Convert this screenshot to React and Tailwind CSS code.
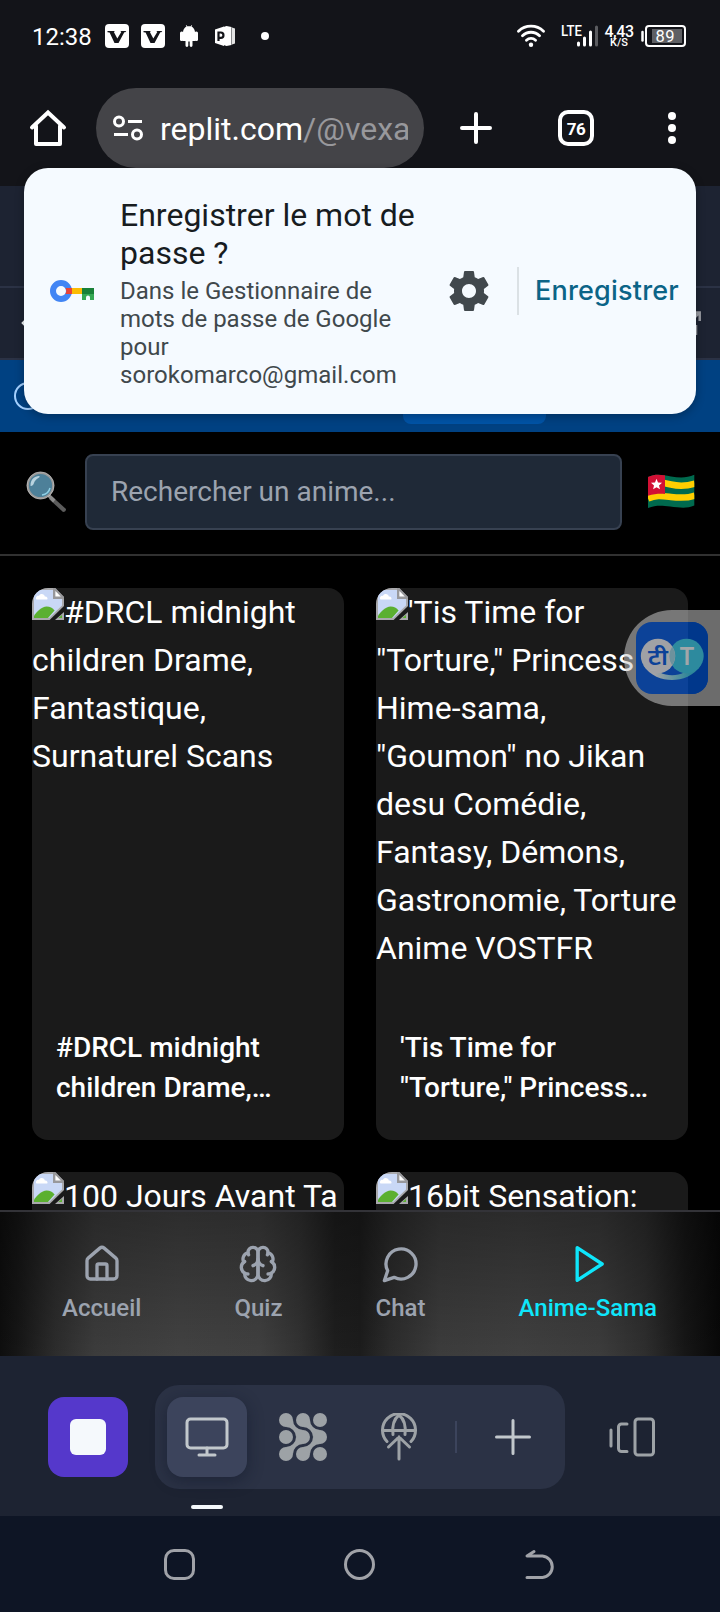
import React from "react";

const cards = [
  {
    alt: "#DRCL midnight children Drame, Fantastique, Surnaturel Scans",
    title: ["#DRCL midnight", "children Drame,…"],
  },
  {
    alt: "'Tis Time for \"Torture,\" Princess Hime-sama, \"Goumon\" no Jikan desu Comédie, Fantasy, Démons, Gastronomie, Torture Anime VOSTFR",
    title: ["'Tis Time for", "\"Torture,\" Princess…"],
  },
  { alt: "100 Jours Avant Ta", title: [] },
  { alt: "16bit Sensation:", title: [] },
];

function VBadge() {
  return (
    <svg className="h-6 w-6" viewBox="0 0 24 24">
      <rect width="24" height="24" rx="4" fill="#fff" />
      <path d="M2.500 7h7.200l-.7 1.200 3.300 6.300 4-6.500-1-1h6l-1 1.300h-1L13.500 19h-4L4.600 8.600l-2.100-.4z" fill="#131419" />
    </svg>
  );
}

function StatusBar() {
  return (
    <div className="flex h-[72px] items-center pl-8 pr-[33px] text-white">
      <span className="w-[73px] pt-px text-2xl leading-6">12:38</span>
      <VBadge />
      <span className="w-3" />
      <VBadge />
      <svg className="ml-[15px] h-[22px] w-[18px]" viewBox="0 0 18 22" fill="#fff">
        <path d="M3 7C3.200 4 5 2.200 6.500 1.500L5.800.2l.5-.2.9 1.200h3.600L11.700 0l.5.2-.7 1.300C13 2.200 14.800 4 15 7v9H12.500v4.500a1.400 1.400 0 0 1-2.800 0V16.500h-1.400v4A1.400 1.400 0 0 1 5.500 20.500V16H3z" />
        <rect x="0" y="6.500" width="3.500" height="9.500" rx="1.500" />
        <rect x="14.500" y="6.500" width="3.500" height="9.500" rx="1.500" />
      </svg>
      <svg className="ml-[17px] h-[20px] w-[20px]" viewBox="0 0 20 20">
        <path d="M0 3.500l9-3V20L0 17z" fill="#fff" />
        <path d="M8.500 1l3-1 5 1v18l-5 1-3-1z" fill="#fff" />
        <path d="M17 1.500l3 1v15l-3 1z" fill="#e4e4e4" />
        <path d="M3.500 15V6.500h2.300a2.600 2.600 0 0 1 0 5.300H3.500" fill="none" stroke="#131419" strokeWidth="2.200" />
      </svg>
      <span className="ml-[26px] h-2 w-2 rounded-full bg-white" />
      <span className="flex-1" />
      <svg className="h-6 w-7" viewBox="0 0 28 24" fill="none" stroke="#fff" strokeWidth="2.800" strokeLinecap="round">
        <path d="M1.500 7.200a18 18 0 0 1 25 0M5.500 11.800a12 12 0 0 1 17 0M9.500 16.200a6.500 6.500 0 0 1 9 0" />
        <circle cx="14" cy="20.800" r="2.200" fill="#fff" stroke="none" />
      </svg>
      <svg className="ml-4 h-6 w-[38px]" viewBox="0 0 38 24">
        <text x="0" y="12" fontSize="15" fontWeight="500" fill="#fff" textLength="21" lengthAdjust="spacingAndGlyphs" fontFamily="Roboto, sans-serif">LTE</text>
        <g stroke="#fff" strokeWidth="3" strokeLinecap="round">
          <path d="M17.500 19v2M23.500 14v7M29.500 8v13" />
          <path d="M35.500 3v18" stroke="#5b5c60" />
        </g>
      </svg>
      <div className="ml-[6px] flex w-7 flex-col items-center font-medium">
        <span className="text-base leading-[13px] tracking-[-0.4px]">4,43</span>
        <span className="text-[11px] leading-[10px]">K/S</span>
      </div>
      <svg className="ml-2 h-[22px] w-[46px]" viewBox="0 0 46 22">
        <path d="M1.500 7v8.500" stroke="#fff" strokeWidth="2.500" strokeLinecap="round" />
        <rect x="5" y="1" width="39" height="20" rx="3" fill="none" stroke="#fff" strokeWidth="2" />
        <rect x="11" y="4" width="30" height="14" fill="#5e5f63" />
        <text x="14.500" y="16.500" fontSize="16.500" fill="#fff" textLength="19" fontFamily="Roboto, sans-serif">89</text>
      </svg>
    </div>
  );
}

function BrowserBar() {
  return (
    <div className="flex h-[114px] items-start pt-4">
      <svg className="ml-7 mt-5 h-10 w-10" viewBox="0 0 40 40" fill="none" stroke="#fff" strokeWidth="4" strokeLinejoin="round" strokeLinecap="round">
        <path d="M4 19.500L20 4.500l16 15" strokeLinejoin="miter" />
        <path d="M8 18v18h24V18" />
      </svg>
      <div className="ml-7 flex h-20 w-[328px] items-center rounded-full bg-[#444448] pl-4">
        <svg className="h-7 w-8" viewBox="0 0 32 28" fill="none" stroke="#fff" strokeWidth="3">
          <circle cx="7" cy="7.500" r="4.500" />
          <path d="M16 7.500h14M2 20.500h14" />
          <circle cx="25" cy="20.500" r="4.500" />
        </svg>
        <div className="ml-4 w-[248px] overflow-hidden whitespace-nowrap pt-px text-[32px] leading-10 text-white">
          replit.com<span className="text-[#98989c]">/@vexa</span>
        </div>
      </div>
      <svg className="ml-9 mt-6 h-8 w-8" viewBox="0 0 32 32" stroke="#fff" strokeWidth="4" strokeLinecap="round">
        <path d="M16 2v28M2 16h28" />
      </svg>
      <div className="ml-[66px] mt-[22px] flex h-9 w-9 items-center justify-center rounded-[10px] border-4 border-white pt-px text-[17px] font-bold leading-5 tracking-[-0.5px] text-white">
        76
      </div>
      <div className="ml-[74px] mt-6 flex h-8 w-2 flex-col justify-between">
        <i className="h-2 w-2 rounded-full bg-white" />
        <i className="h-2 w-2 rounded-full bg-white" />
        <i className="h-2 w-2 rounded-full bg-white" />
      </div>
    </div>
  );
}

function PageHeader() {
  return (
    <div className="h-[246px]">
      <div className="h-[100px] bg-[#1d2332]" />
      <div className="flex h-[74px] items-center justify-between border-y-2 border-[#2b3245] bg-[#1d2332] pl-[21px] pr-[19px]">
        <svg className="h-6 w-6" viewBox="0 0 24 24" fill="none" stroke="#f5f9fc" strokeWidth="2.500">
          <path d="M8 6l-6 6 6 6M2 12h18" />
        </svg>
        <svg className="h-6 w-6" viewBox="0 0 24 24" fill="none" stroke="#9a9ca3" strokeWidth="2.500">
          <path d="M14 1.500h8.700V10M12 12L22 2M19 14v9H1V5h9" />
        </svg>
      </div>
      <div className="flex h-[72px] items-center bg-[#004182]">
        <i className="ml-[14px] h-[28px] w-[28px] rounded-full border-2 border-[#a5d1ff]" />
        <i className="ml-[361px] h-14 w-[143px] rounded-lg bg-[#0053a6]" />
      </div>
    </div>
  );
}

function SavePasswordPopup() {
  return (
    <div className="absolute left-6 top-[168px] flex h-[246px] w-[672px] items-center rounded-[24px] bg-[#f5faff] shadow-[0_2px_10px_rgba(0,0,0,0.3)]">
      <svg className="ml-[26px] h-[22px] w-11" viewBox="0 0 44 22">
        <circle cx="11" cy="11" r="8" fill="none" stroke="#4285f4" strokeWidth="6" />
        <path d="M15.500 8H22v6h-6.500a6 6 0 0 0 0-6z" fill="#ea4335" />
        <path d="M22 8h10v6H22z" fill="#fbbc04" />
        <path d="M32 8h12v6H32z" fill="#188038" />
        <path d="M32 14h12v6h-4v-2.500a2 2 0 0 0-4 0V20h-4z" fill="#34a853" />
      </svg>
      <div className="ml-[26px] w-[320px] pt-[3px]">
        <div className="text-[32px] leading-[38px] text-[#171c1f]">
          Enregistrer le mot de
          <br />
          passe ?
        </div>
        <div className="mt-[5px] text-2xl leading-7 text-[#40484c]">
          Dans le Gestionnaire de
          <br />
          mots de passe de Google
          <br />
          pour
          <br />
          <span className="tracking-[0.03px]">sorokomarco@gmail.com</span>
        </div>
      </div>
      <svg className="ml-[5px] h-12 w-12" viewBox="0 0 24 24" fill="#41484d">
        <path d="M19.430 12.980c.04-.32.070-.64.070-.98s-.03-.66-.07-.98l2.110-1.650c.19-.15.240-.42.120-.64l-2-3.460c-.12-.22-.39-.3-.61-.22l-2.490 1c-.52-.4-1.080-.73-1.690-.98l-.38-2.650C14.460 2.180 14.250 2 14 2h-4c-.25 0-.46.18-.49.420l-.38 2.650c-.61.250-1.170.590-1.690.980l-2.490-1c-.23-.09-.49 0-.61.220l-2 3.460c-.13.220-.07.490.12.640l2.110 1.650c-.04.320-.07.650-.07.980s.030.660.070.980l-2.110 1.650c-.19.150-.24.420-.12.640l2 3.460c.12.220.39.300.61.220l2.490-1c.52.400 1.080.730 1.690.980l.38 2.650c.030.240.240.420.490.420h4c.25 0 .46-.18.490-.42l.38-2.650c.61-.25 1.170-.59 1.690-.98l2.490 1c.23.090.490 0 .61-.22l2-3.460c.12-.22.070-.49-.12-.64l-2.110-1.650zM12 15.500c-1.930 0-3.500-1.570-3.500-3.500s1.570-3.500 3.500-3.500 3.500 1.570 3.500 3.500-1.570 3.500-3.500 3.500z" />
      </svg>
      <i className="ml-6 h-12 w-0.5 bg-[#dbe1e5]" />
      <span className="ml-4 font-['Inter'] text-[27px] font-medium tracking-[0.2px] text-[#0b6487]">Enregistrer</span>
    </div>
  );
}

function SearchRow() {
  return (
    <div className="flex h-[124px] items-start border-b-2 border-[#313131] bg-black pl-[25px] pt-[22px]">
      <svg className="mt-[17px] h-[42px] w-[42px]" viewBox="0 0 42 42">
        <path d="M26 24.500L41 38a3 3 0 0 1-3 3L24 28z" fill="#5c5c5c" />
        <path d="M24.500 23l6 5.500-2.500 3-5.500-6z" fill="#8e8e8e" />
        <circle cx="15.500" cy="14.500" r="12.600" fill="#4d8099" stroke="#999" strokeWidth="2" />
        <circle cx="15.500" cy="14.500" r="13.600" fill="none" stroke="#d8d8d8" strokeWidth=".6" />
        <path d="M5.500 14.500c0-6 4-9.500 8.500-9.500 3 1-4 2.500-5 7-.5 2.500-3.500 4-3.500 2.500z" fill="#b9d3df" />
        <path d="M17 24c4-.5 7-3 8-7" stroke="#8fd0e6" strokeWidth="1.500" fill="none" />
      </svg>
      <input
        className="ml-[18px] h-[76px] w-[537px] rounded-lg border-2 border-[#374151] bg-[#1f2937] px-6 pb-0.5 text-[28px] text-white placeholder-[#9ca3af]"
        placeholder="Rechercher un anime..."
      />
      <svg className="ml-[25px] mt-5 h-9 w-12" viewBox="0 0 48 36">
        <defs>
          <clipPath id="flag">
            <path d="M1 3C9-.5 15 1 24 2.500S40 4 47.300.800V31.500c-8 3.500-15 2-24 1S9 31 1 34z" />
          </clipPath>
        </defs>
        <g clipPath="url(#flag)">
          <rect width="48" height="36" fill="#006a4e" />
          <g fill="none" stroke="#ffce00" strokeWidth="6.500">
            <path d="M1 10C9 7.500 15 8.500 24 10.500s16 1.500 24-1M1 24.500C9 21 15 22 24 23s16 1.500 24-1.500" />
          </g>
          <path d="M0 0h18v20C12 19.500 7 20 0 22z" fill="#d21034" />
          <path d="M9.500 4.800l1.500 3.700 4 .3-3 2.600 1 3.900-3.500-2.100-3.400 2.100.9-3.900-3-2.600 4-.3z" fill="#fff" />
        </g>
      </svg>
    </div>
  );
}

function BrokenImage() {
  return (
    <svg className="float-left h-8 w-8" viewBox="0 0 16 16">
      <path d="M0 0h11.500L16 4.500V9L8.800 16H0z" fill="#a9a9ac" />
      <path d="M1 1h10l4 4v3.700L8.500 15H1z" fill="#c9d8f6" />
      <path d="M2.200 5.800c-.7-1.200.5-2.300 1.300-1.800.4-1.500 2.800-1.200 2.900.2 1.200-.1 1.700 1 1.200 1.600z" fill="#fff" />
      <path d="M1 15v-1c1.200-2 3.800-4.700 6.300-4.700 1.700 0 3 .6 4 2L8 15z" fill="#5bb030" />
      <path d="M10.500 0h1.200L16 4.500v1h-5.500z" fill="#98989b" />
      <path d="M11.700 1.500V4.300h2.700z" fill="#fff" />
      <path d="M16 12v4h-4.500z" fill="#a9a9ac" />
      <path d="M15 13.500V15h-1.800z" fill="#5bb030" />
    </svg>
  );
}

function Card({ card }) {
  return (
    <div className="h-[552px] overflow-hidden rounded-2xl bg-[#1a1a1a] text-white">
      <div className="h-[416px] text-[32px] leading-[48px]">
        <BrokenImage />
        {card.alt}
      </div>
      <div className="p-6 text-[28px] font-medium leading-10">
        {card.title.map((line) => (
          <div key={line} className="whitespace-nowrap">{line}</div>
        ))}
      </div>
    </div>
  );
}

function NavItem({ label, children, className }) {
  return (
    <div className={"flex flex-col items-center text-2xl font-medium " + className}>
      <svg className="h-10 w-10 overflow-visible" viewBox="0 0 24 24" fill="none" stroke="currentColor" strokeWidth="2" strokeLinecap="round" strokeLinejoin="round">
        {children}
      </svg>
      <span className="mt-2 leading-8">{label}</span>
    </div>
  );
}

function AppNav() {
  return (
    <div className="h-[146px] bg-[linear-gradient(90deg,#0e0e0e_0px,#161616_18px,#2c2c2c_55px,#3c3c3c_95px,#424242_180px,#404040_260px,#323232_300px,#1e1e1e_335px,#1c1c1c_360px,#2c2c2c_390px,#3c3c3c_440px,#404040_520px,#3c3c3c_600px,#2e2e2e_645px,#161616_685px,#080808_720px)]">
      <div className="flex h-full justify-between border-t-2 border-[#333338] bg-[linear-gradient(180deg,rgba(0,0,0,0.32),rgba(0,0,0,0))] pl-[62px] pr-[63px] pt-8 text-[#9ca3af]">
        <NavItem label="Accueil" className="">
          <path d="M15 21v-8a1 1 0 0 0-1-1h-4a1 1 0 0 0-1 1v8" />
          <path d="M3 10a2 2 0 0 1 .709-1.528l7-5.999a2 2 0 0 1 2.582 0l7 5.999A2 2 0 0 1 21 10v9a2 2 0 0 1-2 2H5a2 2 0 0 1-2-2z" />
        </NavItem>
        <NavItem label="Quiz" className="">
          <path d="M12 5a3 3 0 1 0-5.997.125 4 4 0 0 0-2.526 5.770 4 4 0 0 0 .556 6.588A4 4 0 1 0 12 18Z" />
          <path d="M12 5a3 3 0 1 1 5.997.125 4 4 0 0 1 2.526 5.770 4 4 0 0 1-.556 6.588A4 4 0 1 1 12 18Z" />
          <path d="M15 13a4.500 4.500 0 0 1-3-4 4.500 4.500 0 0 1-3 4" />
          <path d="M17.599 6.500a3 3 0 0 0 .399-1.375" />
          <path d="M6.003 5.125A3 3 0 0 0 6.401 6.500" />
          <path d="M3.477 10.896a4 4 0 0 1 .585-.396" />
          <path d="M19.938 10.500a4 4 0 0 1 .585.396" />
          <path d="M6 18a4 4 0 0 1-1.967-.516" />
          <path d="M19.967 17.484A4 4 0 0 1 18 18" />
        </NavItem>
        <NavItem label="Chat" className="">
          <path d="M7.900 20A9 9 0 1 0 4 16.100L2 22Z" />
        </NavItem>
        <NavItem label="Anime-Sama" className="text-[#0ee6fb]">
          <path d="M5.500 2.200l15 9.800-15 9.800z" />
        </NavItem>
      </div>
    </div>
  );
}

function WorkspaceBar() {
  return (
    <div className="flex h-40 items-start bg-[#1d2332] pl-12 pt-[29px]">
      <div className="mt-3 flex h-20 w-20 items-center justify-center rounded-2xl bg-[#5538cb]">
        <i className="h-9 w-9 rounded-md bg-[#f5f9fc]" />
      </div>
      <div className="ml-[27px] flex h-[104px] w-[410px] items-start rounded-[24px] bg-[#2b3245] pl-3 pt-3">
        <div className="flex w-20 flex-col items-center">
          <div className="flex h-20 w-20 items-center justify-center rounded-2xl bg-[#3c445c] shadow-[0_4px_16px_rgba(14,21,37,0.45)]">
            <svg className="h-11 w-11" viewBox="0 0 44 44" fill="none" stroke="#c2c8cc" strokeWidth="3" strokeLinecap="round" strokeLinejoin="round">
              <rect x="2" y="4" width="40" height="29" rx="3.500" />
              <path d="M22 33v7M14 40h16" />
            </svg>
          </div>
          <i className="mt-7 h-1 w-8 rounded-full bg-[#f5f9fc]" />
        </div>
        <svg className="ml-8 mt-4 h-12 w-12" viewBox="0 0 48 48" fill="#9da2a6">
          <circle cx="7" cy="7" r="7" />
          <circle cx="24" cy="7" r="7" />
          <circle cx="41" cy="7" r="7" />
          <circle cx="7" cy="24" r="7" />
          <circle cx="24" cy="24" r="7" />
          <circle cx="41" cy="24" r="7" />
          <circle cx="7" cy="41" r="7" />
          <circle cx="24" cy="41" r="7" />
          <circle cx="41" cy="41" r="7" />
          <path d="M14 7A10 10 0 0 0 24 17L17 24A10 10 0 0 0 7 14zM14 41A10 10 0 0 1 24 31L17 24A10 10 0 0 1 7 34z" />
          <path d="M31 7A10 10 0 0 0 41 17L34 24A10 10 0 0 0 24 14zM31 41A10 10 0 0 1 41 31L34 24A10 10 0 0 1 24 34z" />
        </svg>
        <svg className="ml-[54px] mt-4 h-12 w-9" viewBox="0 0 36 48" fill="none" stroke="#9da2a6" strokeWidth="3" strokeLinecap="round" strokeLinejoin="round">
          <path d="M6 28.500a16.500 16.500 0 1 1 24 0M2 17.500h32" />
          <path d="M12 21.500C11 13 13 6 18 2c5 4 7 11 6 19.500" />
          <path d="M18 46V24M7.500 34L18 24l10.500 10" strokeLinejoin="miter" />
        </svg>
        <i className="ml-[38px] mt-6 h-8 w-0.5 bg-[#3c445c]" />
        <svg className="ml-[38px] mt-[22px] h-9 w-9" viewBox="0 0 36 36" stroke="#c2c8cc" strokeWidth="3" strokeLinecap="round">
          <path d="M18 1.500v33M1.500 18h33" />
        </svg>
      </div>
      <svg className="ml-11 mt-8 h-10 w-[46px]" viewBox="0 0 46 40" fill="none" stroke="#9da2a6" strokeWidth="3" strokeLinecap="round" strokeLinejoin="round">
        <path d="M2 13v16M18 7h-5.500a3 3 0 0 0-3 3v21.500a3 3 0 0 0 3 3H18" />
        <rect x="26" y="2" width="18.500" height="36" rx="3" />
      </svg>
    </div>
  );
}

function SystemNav() {
  return (
    <div className="flex h-24 items-center justify-between bg-[#0e1525] pl-[164px] pr-[165px]">
      <i className="h-[31px] w-[31px] rounded-[10px] border-[3px] border-[#a0a2a8]" />
      <i className="h-[31px] w-[31px] rounded-full border-[3px] border-[#a0a2a8]" />
      <svg className="h-[31px] w-[31px]" viewBox="0 0 31 31" fill="none" stroke="#a0a2a8" strokeWidth="3" strokeLinecap="round" strokeLinejoin="round">
        <path d="M10 2.500L3 7h15.500a10.800 10.800 0 0 1 0 21.500H3" />
      </svg>
    </div>
  );
}

function TranslateBubble() {
  return (
    <div className="absolute right-0 top-[610px] flex h-24 w-24 items-center rounded-l-full bg-[rgba(200,200,200,0.54)] pl-3">
      <svg className="h-[72px] w-[72px]" viewBox="0 0 72 72">
        <defs>
          <linearGradient id="smile">
            <stop offset="0.2" stopColor="#a3a3a6" />
            <stop offset="0.8" stopColor="#2d8699" />
          </linearGradient>
        </defs>
        <rect width="72" height="72" rx="16" fill="#0c4298" />
        <path d="M52 0h4a16 16 0 0 1 16 16v40a16 16 0 0 1-16 16h-4z" fill="#00378b" />
        <path d="M7 43C14 54 26 58 36 58S58 54 65 43L50 51H22z" fill="url(#smile)" />
        <path d="M24 50.500C31 54 41 54 48 50.500L36 44z" fill="#0c4298" />
        <circle cx="50.500" cy="34" r="17.200" fill="#2d8a9e" />
        <circle cx="22" cy="34" r="17.200" fill="#a0a1a5" />
        <path d="M36.250 24.400a17.200 17.200 0 0 1 0 19.200 17.200 17.200 0 0 1 0-19.200z" fill="#6d929d" />
        <text x="12" y="43" textLength="20" lengthAdjust="spacingAndGlyphs" fontSize="23" fontWeight="600" fill="#0c4298" fontFamily="'Noto Sans Devanagari', 'Noto Sans', sans-serif">टी</text>
        <text x="51" y="43" textAnchor="middle" fontSize="24" fontWeight="600" fill="#a3a6a9" fontFamily="Inter, sans-serif">T</text>
      </svg>
    </div>
  );
}

export default function App() {
  return (
    <div className="relative h-[1612px] w-[720px] overflow-hidden bg-black font-['Roboto',sans-serif]">
      <div className="bg-[#131419]">
        <StatusBar />
        <BrowserBar />
      </div>
      <PageHeader />
      <SearchRow />
      <div className="grid h-[654px] grid-cols-2 gap-8 overflow-hidden px-8 pt-8">
        {cards.map((card) => (
          <Card key={card.alt} card={card} />
        ))}
      </div>
      <AppNav />
      <WorkspaceBar />
      <SystemNav />
      <SavePasswordPopup />
      <TranslateBubble />
    </div>
  );
}
